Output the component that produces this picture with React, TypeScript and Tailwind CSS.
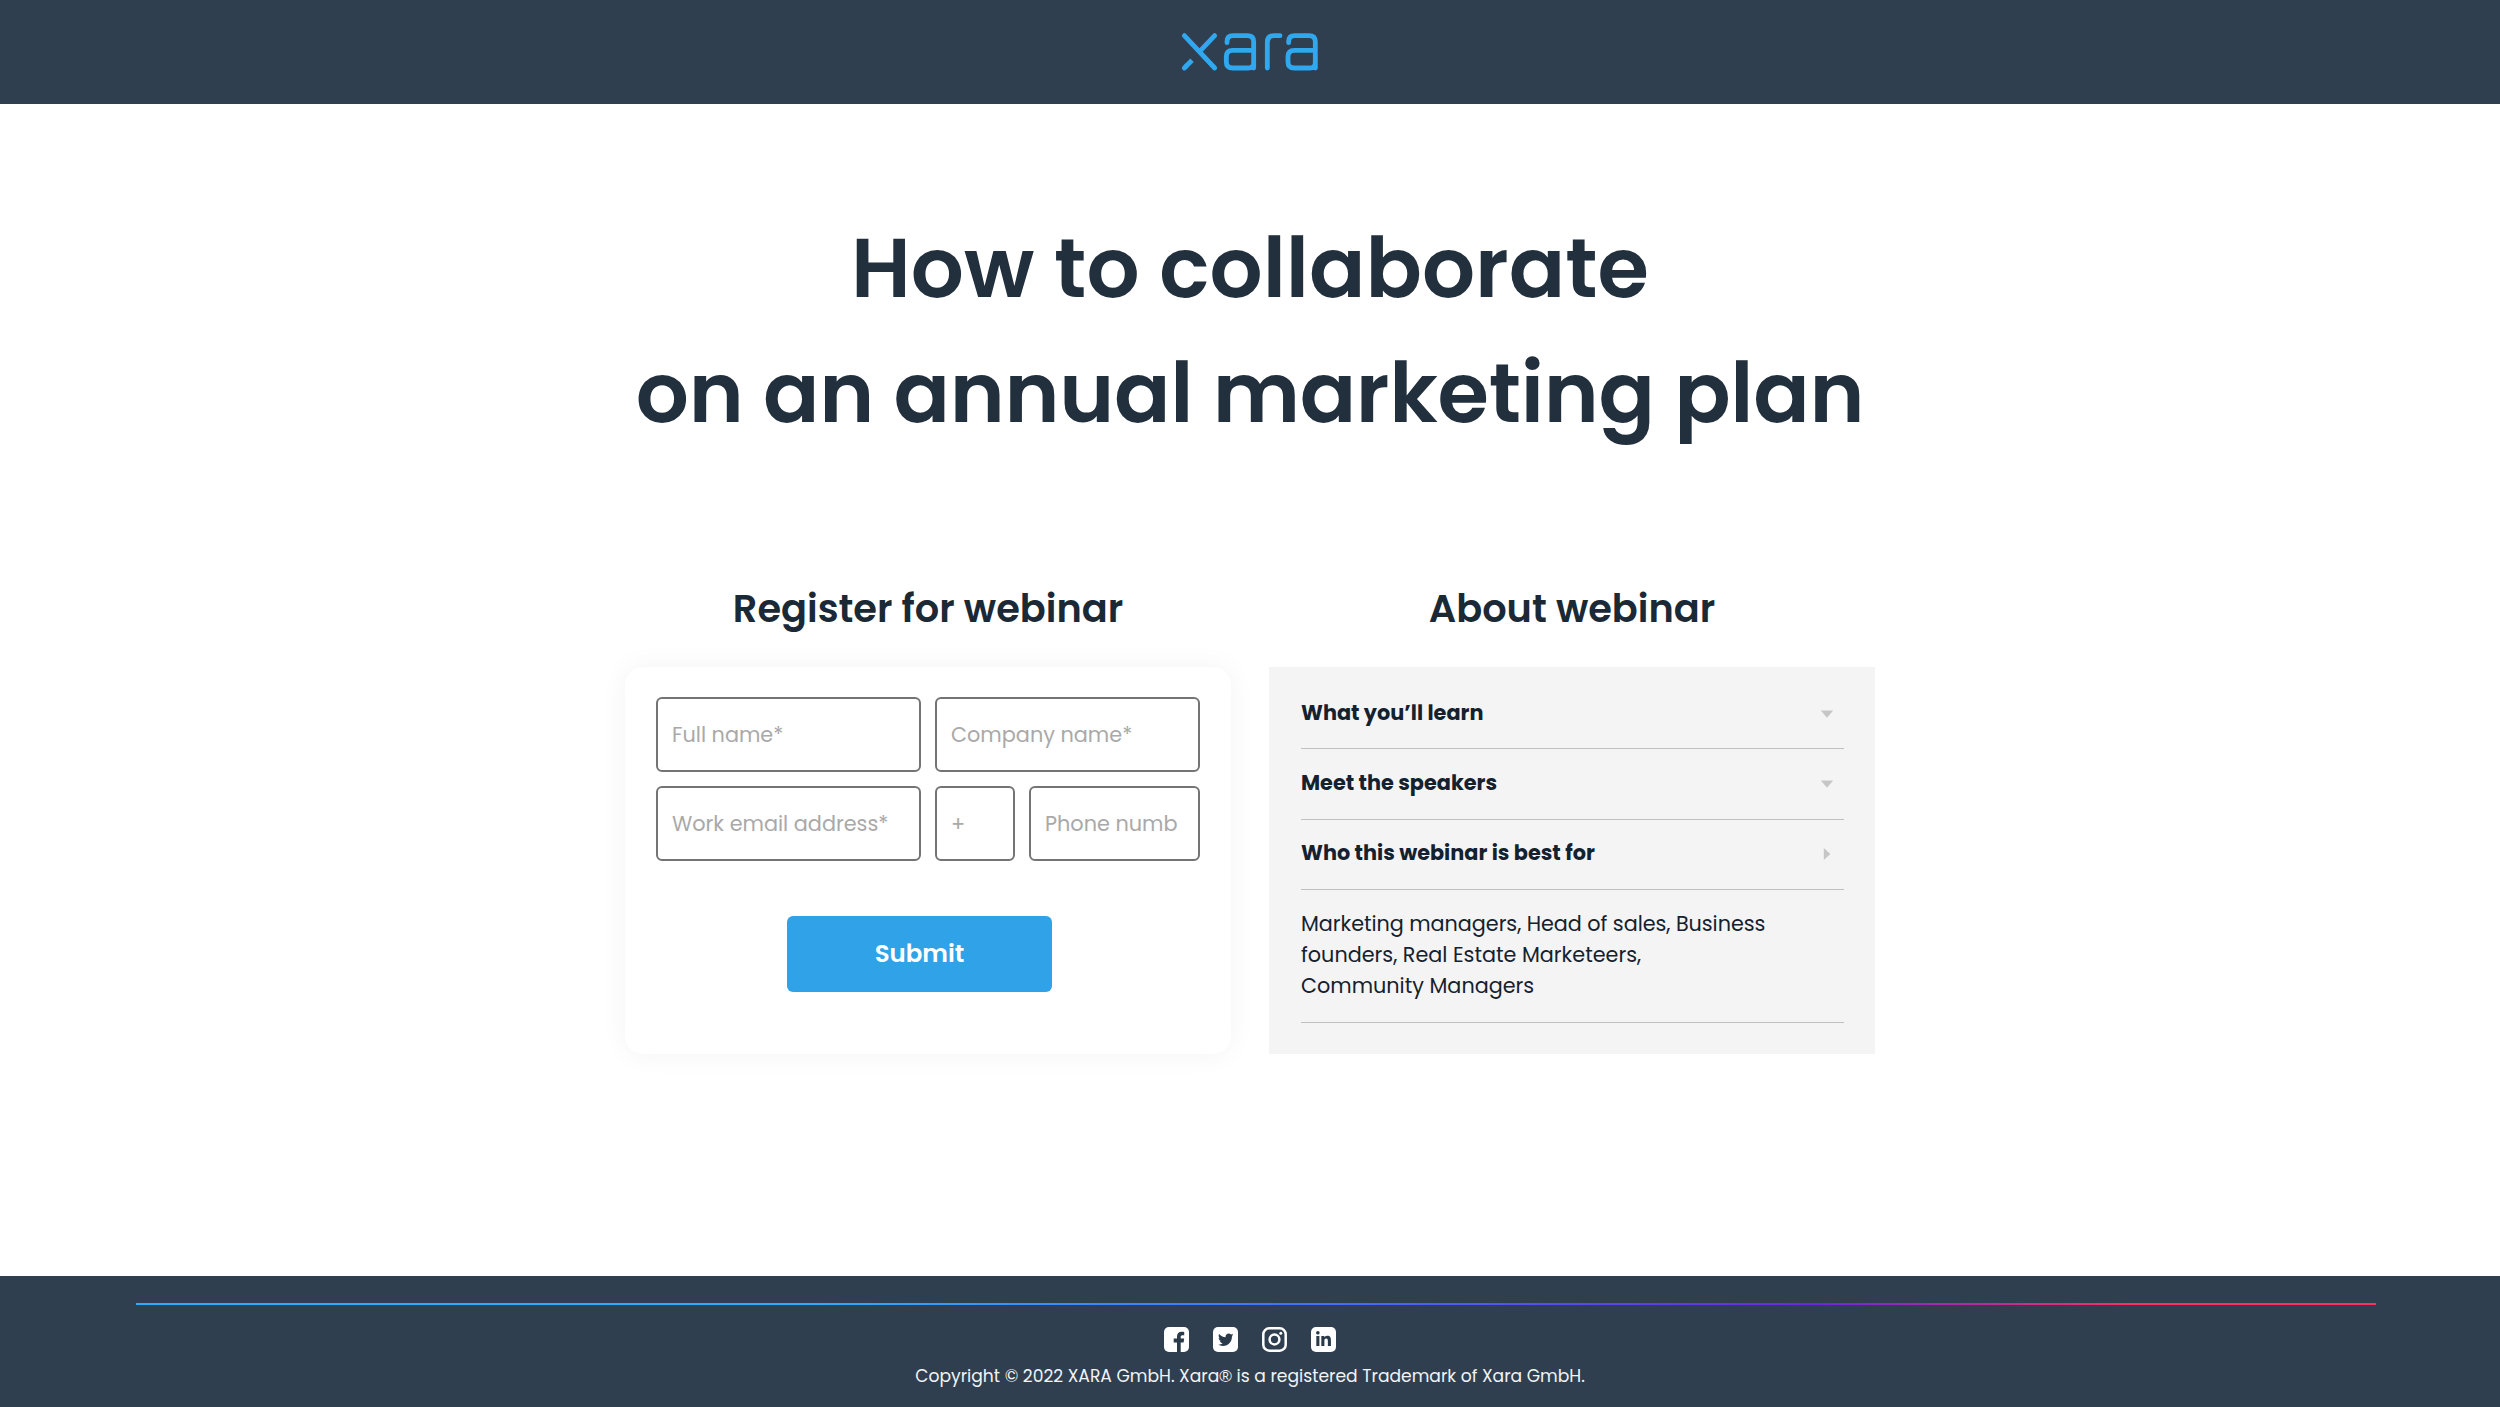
import type { ReactNode } from "react";
import { FaLinkedinIn, FaTwitter } from "react-icons/fa";

function XaraLogo() {
  return (
    <svg
      viewBox="90 90 420 130"
      className="h-[43.33px] w-[140px]"
      fill="none"
      stroke="#2fa8f0"
      strokeWidth="14.5"
      strokeLinecap="round"
      strokeLinejoin="round"
      aria-label="Xara"
    >
      <path d="M103 107 L194 204 M194 107 L152 151" />
      <path d="M103 204 L109 198" />
      <path d="M106 201 L126 181" strokeLinecap="butt" />
      <path d="M231 128 V125 Q231 107 249 107 H292 Q311 107 311 125 V204 M311 151 H248 Q229 151 229 170 V186 Q229 204 248 204 H294 Q311 204 311 188" />
      <path d="M352 204 V127 Q352 107 372 107 H390" />
      <path d="M416 128 V125 Q416 107 434 107 H477 Q496 107 496 125 V204 M496 151 H433 Q414 151 414 170 V186 Q414 204 433 204 H479 Q496 204 496 188" />
    </svg>
  );
}

const fieldBase =
  "h-[75px] rounded-md border-2 border-[#747474] bg-white pl-3.5 text-[20.8px] text-[#222f3c] outline-none placeholder:text-[#a9a9a9] placeholder:opacity-100";

function Field({ label, className }: { label: string; className: string }) {
  return <input type="text" placeholder={label} aria-label={label} className={`${fieldBase} ${className}`} />;
}

function AccordionRow({ title, open }: { title: string; open?: boolean }) {
  return (
    <div className="flex h-[70.33px] items-center justify-between border-b border-[#c0c0c0]">
      <span className="pb-[3px] text-[20.8px] font-bold">{title}</span>
      <svg viewBox="0 0 14 14" className="mr-2.5 size-3.5 fill-[#c6c6c6]">
        {open ? <path d="M3.8 1 L10.4 7 L3.8 13 Z" /> : <path d="M0.8 3.6 H13.2 L7 10.8 Z" />}
      </svg>
    </div>
  );
}

function SocialTile({ children }: { children: ReactNode }) {
  return (
    <span className="flex size-[25px] items-center justify-center rounded-[5px] bg-white text-[#2a3a49]">
      {children}
    </span>
  );
}

export default function App() {
  return (
    <div className="flex h-[1407px] flex-col bg-white font-['Poppins','Inter',sans-serif] text-[#14212e] [font-feature-settings:'cv11']">
      <header className="flex h-[104px] shrink-0 items-center justify-center bg-[#2f3f4f]">
        <XaraLogo />
      </header>

      <main className="mx-auto flex w-[1250px] grow flex-col pt-[102px]">
        <h1 className="text-center text-[83.3px] leading-[125px] font-semibold whitespace-nowrap text-[#222f3c]">
          <span className="block">How to collaborate</span>
          <span className="block tracking-[-0.28px]">on an annual marketing plan</span>
        </h1>

        <div className="mt-[123px] grid grid-cols-2 gap-[38px]">
          <section>
            <h2 className="mb-7 text-center text-[38.3px] leading-[60px] font-semibold text-[#1b2936]">
              Register for webinar
            </h2>
            <form className="h-[387px] rounded-[18px] bg-white px-[31px] pt-[30px] shadow-[0_0_28px_rgba(0,0,0,0.05)]">
              <div className="flex gap-3.5">
                <Field label="Full name*" className="w-[265px]" />
                <Field label="Company name*" className="w-[265px]" />
              </div>
              <div className="mt-3.5 flex gap-3.5">
                <Field label="Work email address*" className="w-[265px]" />
                <Field label="+" className="w-20" />
                <Field label="Phone numb" className="w-[171px]" />
              </div>
              <button
                type="button"
                className="mt-[55px] ml-[131px] flex h-[76px] w-[265px] items-center justify-center rounded-md bg-[#30a3e8] text-[24.5px] font-semibold text-white"
              >
                Submit
              </button>
            </form>
          </section>

          <section>
            <h2 className="mb-7 text-center text-[38.3px] leading-[60px] font-semibold text-[#1b2936]">
              About webinar
            </h2>
            <div className="h-[387px] bg-[#f4f4f4] pt-3 pr-[31px] pl-8">
              <AccordionRow title="What you’ll learn" />
              <AccordionRow title="Meet the speakers" />
              <AccordionRow title="Who this webinar is best for" open />
              <p className="h-[133px] border-b border-[#c0c0c0] pt-[18px] text-[20.75px] leading-[31.2px] whitespace-nowrap">
                <span className="block tracking-[-0.04px]">Marketing managers, Head of sales, Business</span>
                <span className="block">founders, Real Estate Marketeers,</span>
                <span className="block">Community Managers</span>
              </p>
            </div>
          </section>
        </div>
      </main>

      <footer className="flex h-[131px] shrink-0 flex-col items-center bg-[#2f3f4f] pt-[27px]">
        <div className="ml-3 h-0.5 w-[2240px] bg-[linear-gradient(90deg,#2fabfb_0%,#2fabfb_30%,#446cfa_54%,#6a28dd_75%,#fb2f62_89%,#fb2f62_100%)]" />
        <div className="mt-[22px] flex gap-6">
          <SocialTile>
            <svg viewBox="0 0 25 25" className="size-full fill-current">
              <path d="M13 25 V15.4 H9.7 V11.6 H13 V9.6 C13 6.3 14.8 4.7 17.7 4.7 C18.7 4.7 19.5 4.8 20.2 4.9 V8.3 H18.4 C17.1 8.3 16.7 9 16.7 10 V11.6 H20.2 L19.6 15.4 H16.7 V25 Z" />
            </svg>
          </SocialTile>
          <SocialTile>
            <FaTwitter className="size-[15.5px]" />
          </SocialTile>
          <svg viewBox="0 0 25 25" className="size-[25px] fill-none stroke-white stroke-[2.5]">
            <rect x="1.3" y="1.3" width="22.4" height="22.4" rx="6" />
            <circle cx="12.5" cy="12.5" r="4.9" />
            <circle cx="18.8" cy="6.3" r="1.5" className="fill-white stroke-none" />
          </svg>
          <SocialTile>
            <FaLinkedinIn className="size-[17px]" />
          </SocialTile>
        </div>
        <p className="mt-3 text-[17.15px] leading-6 text-[#f1f3f5]">
          Copyright © 2022 XARA GmbH. Xara<span className="font-['Liberation_Sans',sans-serif]">®</span> is a registered
          Trademark of Xara GmbH.
        </p>
      </footer>
    </div>
  );
}
